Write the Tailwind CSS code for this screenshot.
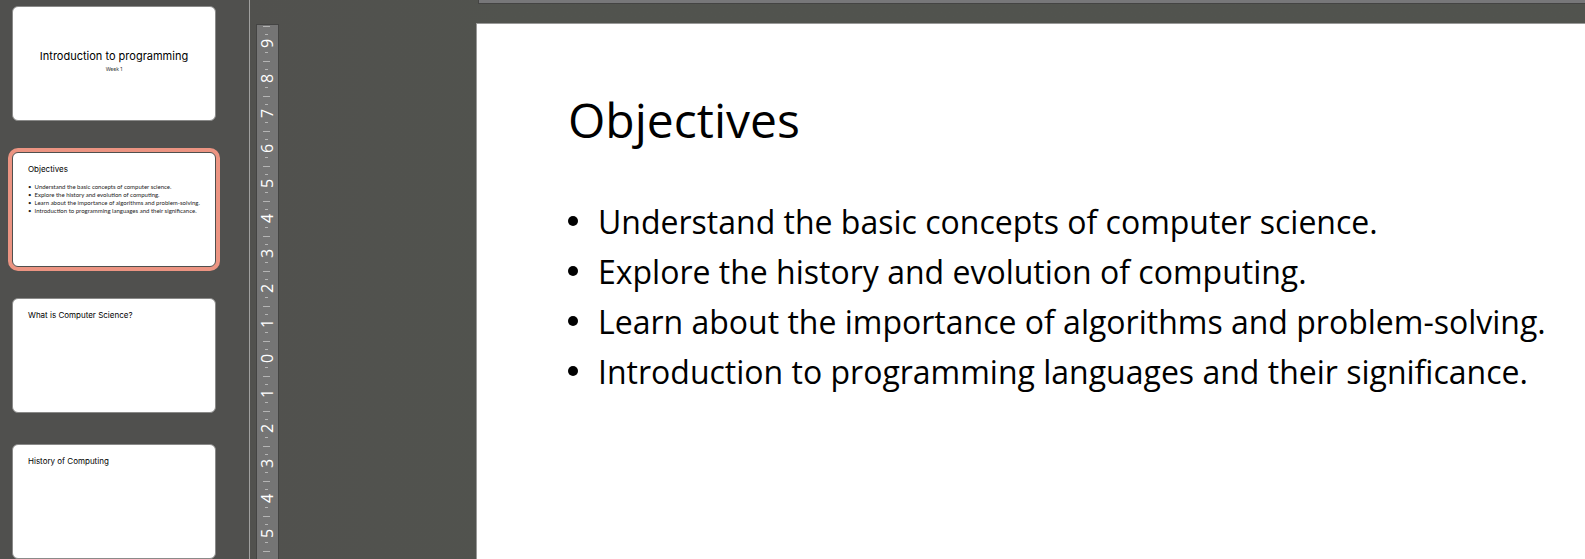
<!DOCTYPE html>
<html lang="en">
<head>
<meta charset="utf-8">
<title>Introduction to programming</title>
<script src="https://cdn.jsdelivr.net/npm/@tailwindcss/browser@4"></script>
</head>
<body class="h-screen overflow-hidden bg-[#50504e] font-['Inter',sans-serif] text-black">
<div class="flex h-full">
  <aside class="w-[250px] shrink-0 overflow-hidden border-r border-[#a0a09f] px-3 pt-[6px]" aria-label="Slides">
    <ol class="flex flex-col gap-[31px]">
      <li><button class="flex h-[115px] w-[204px] flex-col items-center rounded-md border border-[#8a8a89] bg-white pt-[41px] text-center">
        <span class="text-[11px] leading-4">Introduction to programming</span>
        <span class="mt-[2px] text-[5px] leading-[6px] text-[#333]">Week 1</span>
      </button></li>
      <li><button aria-current="true" class="flex h-[115px] w-[204px] flex-col rounded-md border border-[#50504e] bg-white px-[15px] pt-[10px] text-left ring-4 ring-[#ec9482]">
        <span class="text-[8px] leading-3">Objectives</span>
        <span class="mt-2 flex flex-col font-['Lato',sans-serif] text-[6px] leading-[8px] whitespace-nowrap text-[#222]">
          <span>•&nbsp; Understand the basic concepts of computer science.</span>
          <span>•&nbsp; Explore the history and evolution of computing.</span>
          <span>•&nbsp; Learn about the importance of algorithms and problem-solving.</span>
          <span>•&nbsp; Introduction to programming languages and their significance.</span>
        </span>
      </button></li>
      <li><button class="flex h-[115px] w-[204px] flex-col rounded-md border border-[#8a8a89] bg-white px-[15px] pt-[10px] text-left">
        <span class="text-[8px] leading-3">What is Computer Science?</span>
      </button></li>
      <li><button class="flex h-[115px] w-[204px] flex-col rounded-md border border-[#8a8a89] bg-white px-[15px] pt-[10px] text-left">
        <span class="text-[8px] leading-3">History of Computing</span>
      </button></li>
    </ol>
  </aside>

  <div class="flex min-w-0 flex-1 bg-linear-to-r from-[#51514e] to-[#51534e] to-20% pl-[6px]">
    <ol id="ruler" class="mt-6 w-[23px] shrink-0 overflow-hidden border border-b-0 border-[#444443] bg-[#757575] font-['Open_Sans',sans-serif] text-[16px] text-white" aria-label="Vertical ruler"></ol>

    <main class="ml-[197px] flex min-w-0 flex-1 flex-col font-['Open_Sans',sans-serif]">
      <div class="ml-[2px] h-1 shrink-0 border-b border-l border-[#444443] bg-[#777779]"></div>
      <article class="mt-[19px] flex-1 border-t border-l border-[#999998] bg-white pt-[66px] pl-[91px]">
        <h1 class="text-[48px] leading-[60px]">Objectives</h1>
        <ul class="mt-[47px] flex flex-col text-[32px] leading-[50px] whitespace-nowrap">
          <li class="flex items-center gap-5"><span class="mb-[2px] size-[10px] rounded-full bg-black"></span>Understand the basic concepts of computer science.</li>
          <li class="flex items-center gap-5"><span class="mb-[2px] size-[10px] rounded-full bg-black"></span>Explore the history and evolution of computing.</li>
          <li class="flex items-center gap-5"><span class="mb-[2px] size-[10px] rounded-full bg-black"></span>Learn about the importance of algorithms and problem-solving.</li>
          <li class="flex items-center gap-5"><span class="mb-[2px] size-[10px] rounded-full bg-black"></span>Introduction to programming languages and their significance.</li>
        </ul>
      </article>
    </main>
  </div>
</div>
<script>
  // One 35px unit: long tick, short tick, number, short tick.
  document.getElementById('ruler').innerHTML = [9,8,7,6,5,4,3,2,1,0,1,2,3,4,5,''].map(n => `
    <li class="flex h-[35px] flex-col pt-px">
      <span class="ml-[6px] h-px w-[7px] bg-[#b4b4b4]"></span>
      <span class="mt-[7px] ml-2 h-px w-[3px] bg-[#b4b4b4]"></span>
      <span class="flex h-[17px] w-full items-center justify-center"><span class="-rotate-90 leading-[17px]">${n}</span></span>
      <span class="ml-2 h-px w-[3px] bg-[#b4b4b4]"></span>
    </li>`).join('');
</script>
</body>
</html>
